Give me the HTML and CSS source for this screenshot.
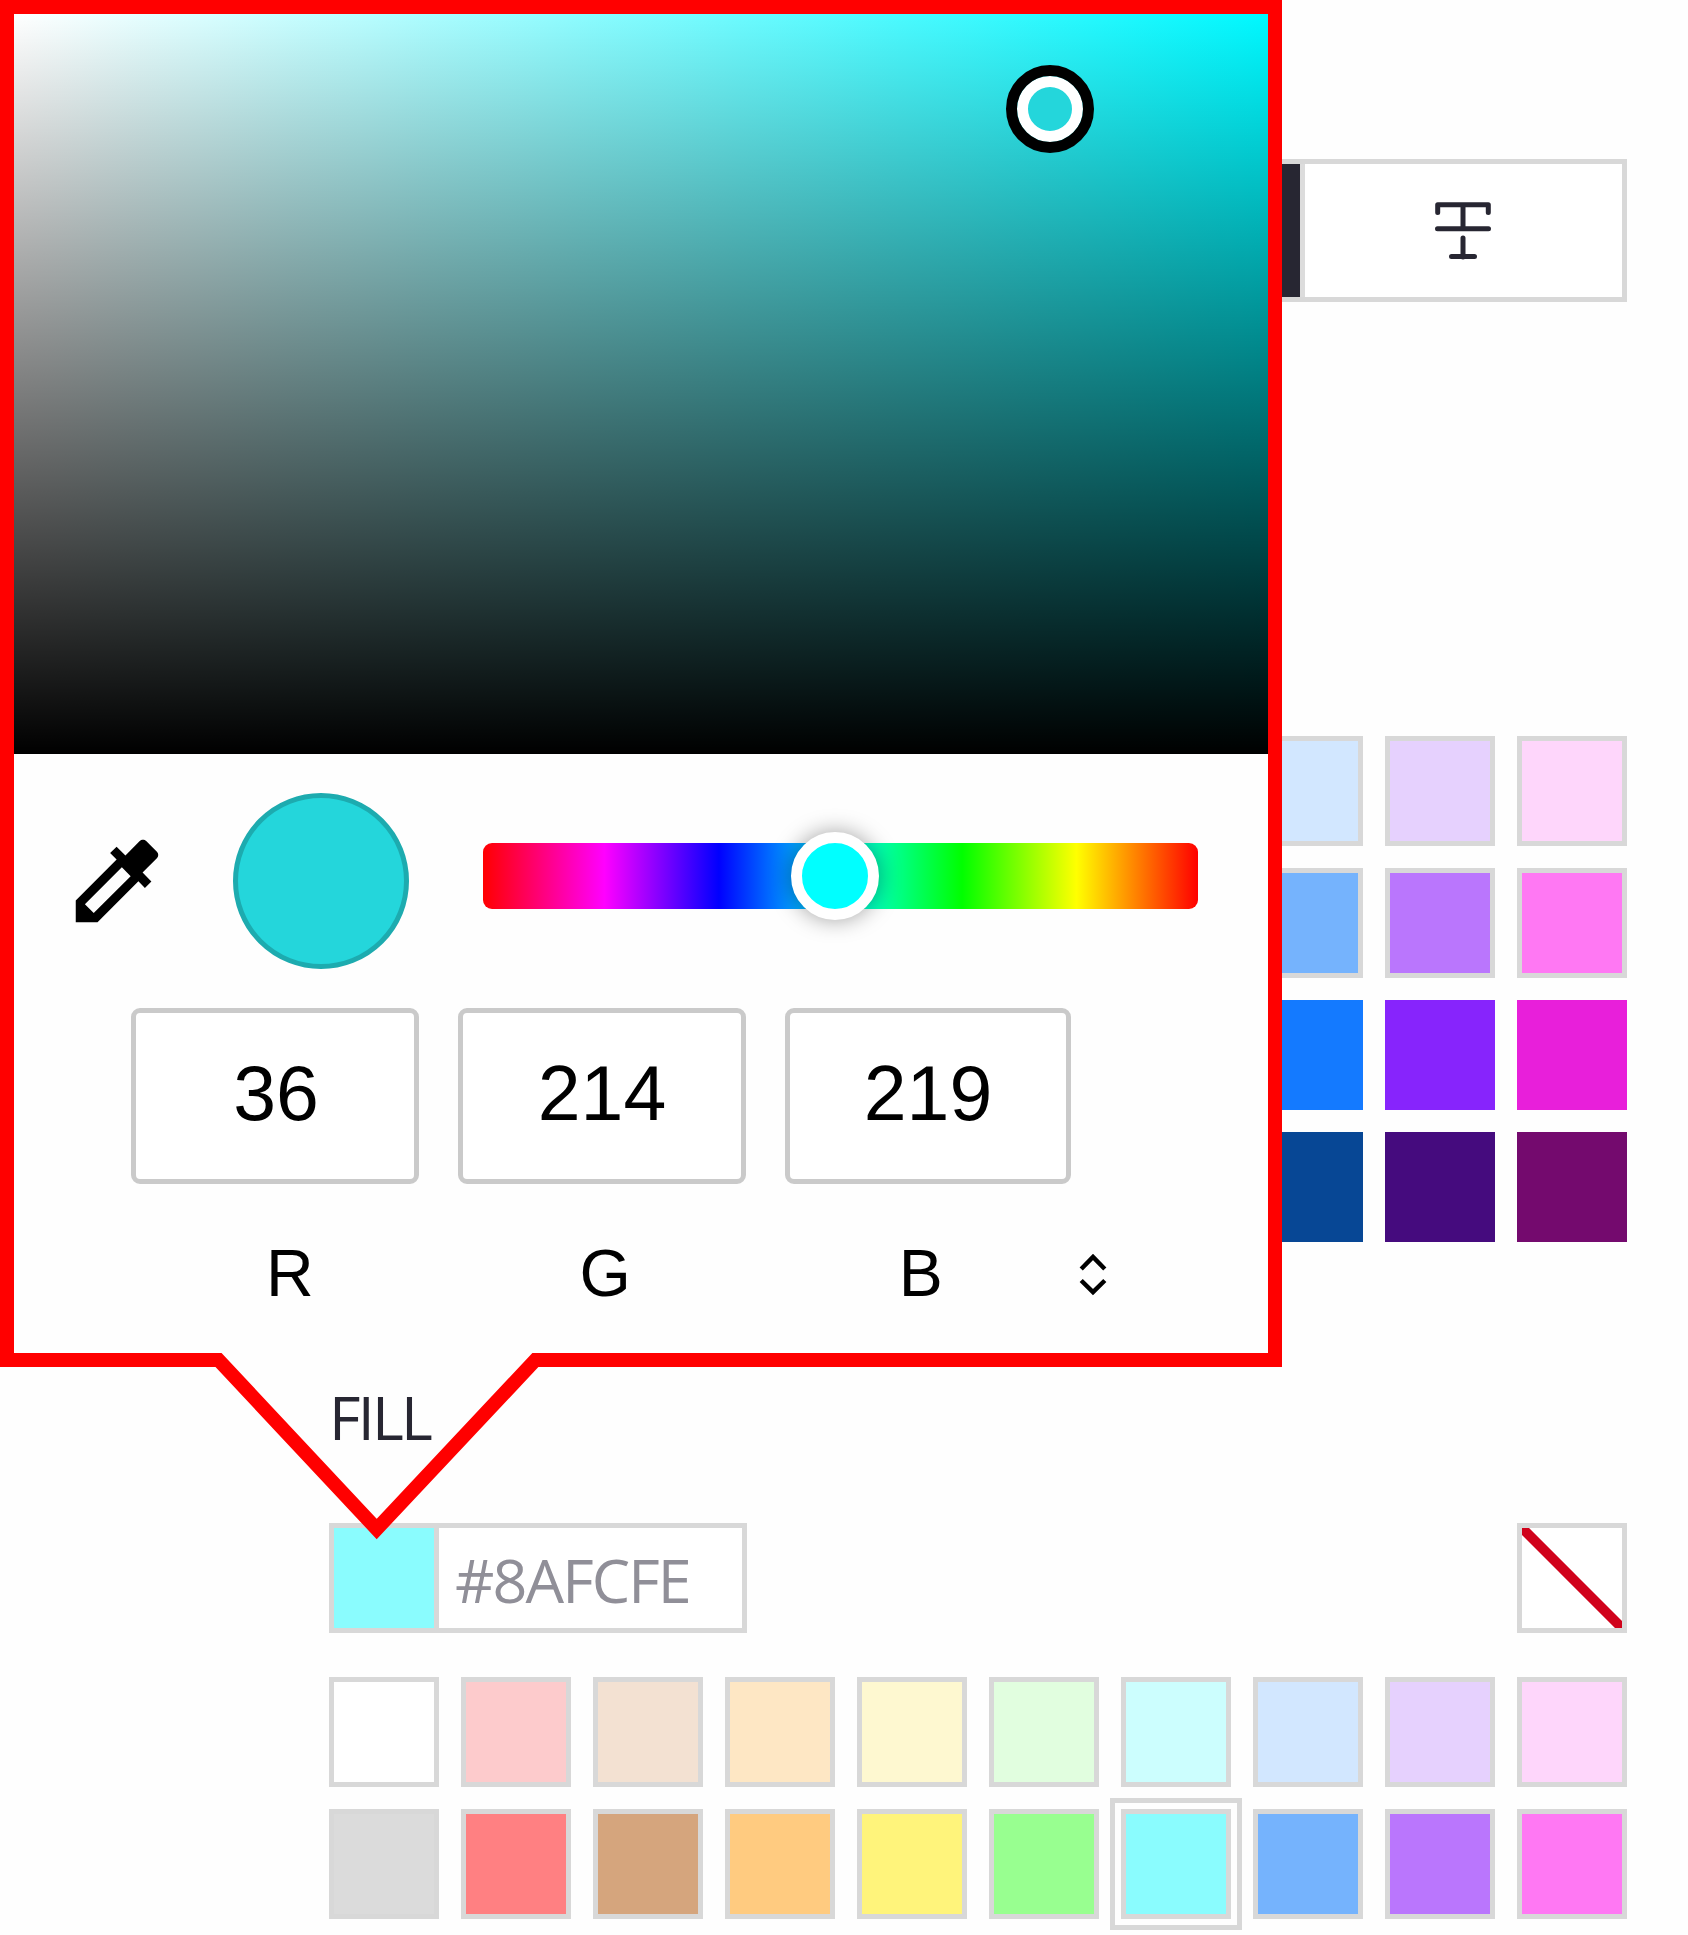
FILE: index.html
```
<!DOCTYPE html>
<html lang="en">
<head>
<meta charset="utf-8">
<title>Fill color</title>
<link rel="stylesheet" href="styles.css">
</head>
<body>
<main class="panel">
  <div class="toolbar">
    <div class="tool tool-active"></div>
    <div class="tool">
      <svg class="strike-icon" viewBox="0 0 60 60"><path d="M4.7 12.500V4.700H55.300V12.500M30 4.700V28.500M4.500 28.800H55.500M30 38V57M18.500 56.600H41.500"/></svg>
    </div>
  </div>

  <section class="palette palette-top">
    <div class="row">
      <i class="swatch c-blue1"></i><i class="swatch c-violet1"></i><i class="swatch c-pink1"></i>
    </div>
    <div class="row">
      <i class="swatch c-blue2"></i><i class="swatch c-violet2"></i><i class="swatch c-pink2"></i>
    </div>
    <div class="row">
      <i class="swatch solid c-blue3"></i><i class="swatch solid c-violet3"></i><i class="swatch solid c-pink3"></i>
    </div>
    <div class="row">
      <i class="swatch solid c-blue4"></i><i class="swatch solid c-violet4"></i><i class="swatch solid c-pink4"></i>
    </div>
  </section>

  <h2 class="fill-title">FILL</h2>

  <div class="hex-row">
    <div class="hex-field">
      <i class="hex-chip"></i>
      <span class="hex-value">#8AFCFE</span>
    </div>
    <div class="swatch no-fill">
      <svg viewBox="0 0 100 100"><path d="M3 3L97 97"/></svg>
    </div>
  </div>

  <section class="palette">
    <div class="row">
      <i class="swatch c-white"></i><i class="swatch c-red1"></i><i class="swatch c-brown1"></i><i class="swatch c-orange1"></i><i class="swatch c-yellow1"></i><i class="swatch c-green1"></i><i class="swatch c-cyan1"></i><i class="swatch c-blue1"></i><i class="swatch c-violet1"></i><i class="swatch c-pink1"></i>
    </div>
    <div class="row">
      <i class="swatch c-grey"></i><i class="swatch c-red2"></i><i class="swatch c-brown2"></i><i class="swatch c-orange2"></i><i class="swatch c-yellow2"></i><i class="swatch c-green2"></i><i class="swatch selected c-cyan2"></i><i class="swatch c-blue2"></i><i class="swatch c-violet2"></i><i class="swatch c-pink2"></i>
    </div>
  </section>
</main>

<aside class="picker">
  <div class="spectrum"><div class="spectrum-handle"></div></div>
  <div class="controls">
    <svg class="dropper" viewBox="0 0 24 24"><path d="M20.710 5.630l-2.340-2.340c-.39-.39-1.020-.39-1.410 0l-3.120 3.120-1.930-1.910-1.410 1.410 1.420 1.420L3 16.250V21h4.750l8.920-8.920 1.420 1.420 1.410-1.410-1.920-1.920 3.120-3.120c.4-.4.4-1.030.01-1.420zM6.920 19L5 17.080l8.060-8.060 1.920 1.920L6.920 19z"/></svg>
    <div class="preview"></div>
    <div class="hue"><div class="hue-handle"></div></div>
  </div>
  <div class="channels">
    <div class="channel">36</div>
    <div class="channel">214</div>
    <div class="channel channel-last">219</div>
  </div>
  <div class="labels">
    <span class="label">R</span>
    <span class="label">G</span>
    <span class="label">B</span>
    <svg class="stepper" viewBox="0 0 28 44"><path d="M2.200 17L14 5L25.800 17M2.200 28.500L14 40L25.800 28.500"/></svg>
  </div>
  <svg class="outline" viewBox="0 0 1282 1545"><path d="M7 7H1275V1360H535.400L376.700 1529L218.500 1360H7Z"/></svg>
</aside>
</body>
</html>
```
FILE: styles.css
```
* {
  box-sizing: border-box;
}

body {
  margin: 0;
  width: 1688px;
  height: 1935px;
  overflow: hidden;
  position: relative;
  background: #fefefe;
  font-family: "Liberation Sans", Arial, sans-serif;
}

svg {
  display: block;
}

/* Properties panel */
.panel {
  width: 1627px;
  padding: 159px 0 0 329px;
}

.toolbar {
  height: 143px;
  border: 5px solid #d8d8d8;
  background: #fff;
  display: flex;
  justify-content: flex-end;
}

.tool {
  width: 317px;
  display: flex;
  align-items: center;
  justify-content: center;
}

.tool-active {
  background: #272632;
  width: 322px;
  border-right: 5px solid #dcdcdc;
}

.strike-icon {
  width: 60px;
  height: 60px;
  margin: 0 2px 2px 0;
}

.strike-icon path {
  fill: none;
  stroke: #272632;
  stroke-width: 5;
  stroke-linecap: round;
  stroke-linejoin: round;
}

.palette {
  display: flex;
  flex-direction: column;
  gap: 22px;
}

.palette-top {
  margin-top: 434px;
}

.row {
  display: flex;
  justify-content: flex-end;
  gap: 22px;
}

.swatch {
  display: block;
  width: 110px;
  height: 110px;
  border: 5px solid #d8d8d8;
}

.solid {
  border: 0;
}

.selected {
  outline: 5px solid #d8d8d8;
  outline-offset: 6px;
}

.c-white { background: #fff; }
.c-red1 { background: #fdcbcc; }
.c-brown1 { background: #f3e1d2; }
.c-orange1 { background: #fee7c4; }
.c-yellow1 { background: #fef8d0; }
.c-green1 { background: #e1fedf; }
.c-cyan1 { background: #ccfefe; }
.c-blue1 { background: #d2e7ff; }
.c-violet1 { background: #e6d1fe; }
.c-pink1 { background: #fed6fb; }
.c-grey { background: #dbdbdb; }
.c-red2 { background: #ff8082; }
.c-brown2 { background: #d5a57d; }
.c-orange2 { background: #ffcb80; }
.c-yellow2 { background: #fff47b; }
.c-green2 { background: #98ff90; }
.c-cyan2 { background: #8afcfe; }
.c-blue2 { background: #75b3fd; }
.c-violet2 { background: #ba76fd; }
.c-pink2 { background: #ff78f3; }
.c-blue3 { background: #147aff; }
.c-violet3 { background: #8724fc; }
.c-pink3 { background: #e81fda; }
.c-blue4 { background: #074795; }
.c-violet4 { background: #450b7e; }
.c-pink4 { background: #740a6e; }

.fill-title {
  margin: 132px 0 0;
  height: 87px;
  font: 400 61px/86px "Open Sans", "Noto Sans", sans-serif;
  letter-spacing: -2.800px;
  color: #272632;
}

.hex-row {
  margin: 62px 0 44px;
  display: flex;
  justify-content: space-between;
}

.hex-field {
  width: 418px;
  height: 110px;
  border: 5px solid #d8d8d8;
  background: #fff;
  display: flex;
}

.hex-chip {
  width: 105px;
  background: #8afcfe;
  border-right: 5px solid #d8d8d8;
}

.hex-value {
  padding-left: 16px;
  font: 400 61px/103px "Open Sans", "Noto Sans", sans-serif;
  letter-spacing: -1.900px;
  color: #908f98;
}

.no-fill {
  background: #fff;
}

.no-fill path {
  stroke: #d0021b;
  stroke-width: 10;
  stroke-linecap: round;
}

/* Color picker callout, floating over the panel */
.picker {
  position: absolute;
  left: 0;
  top: 0;
  width: 1282px;
  height: 1367px;
  padding: 14px;
  background: #fefefe;
  color: #000;
}

.spectrum {
  position: relative;
  height: 740px;
  background: linear-gradient(to top, #000, transparent), linear-gradient(to right, #fff, #00f8ff);
}

.spectrum-handle {
  position: absolute;
  left: 991.500px;
  top: 50.500px;
  width: 88px;
  height: 88px;
  border-radius: 50%;
  border: 11px solid #000;
  background: #24d6db;
  box-shadow: inset 0 0 0 11px #fff;
}

.controls {
  height: 254px;
  padding-left: 48px;
  display: flex;
  align-items: flex-start;
}

.dropper {
  width: 110px;
  height: 110px;
  margin-top: 71.500px;
}

.preview {
  width: 176px;
  height: 176px;
  margin: 39px 0 0 60.500px;
  border-radius: 50%;
  border: 5px solid #1dabaf;
  background: #24d6db;
}

.hue {
  position: relative;
  width: 715px;
  height: 66px;
  margin: 89px 0 0 74px;
  border-radius: 9px;
  background: linear-gradient(to right, #f00, #f0f 17%, #00f 33%, #0ff 50%, #0f0 67%, #ff0 83%, #f00);
}

.hue-handle {
  position: absolute;
  left: 308px;
  top: -11px;
  width: 88px;
  height: 88px;
  border-radius: 50%;
  border: 11px solid #fff;
  background: #0ff;
  box-shadow: 0 0 22px rgba(0, 0, 0, .37);
}

.channels {
  display: flex;
  gap: 39px;
  padding-left: 117px;
}

.channel {
  width: 288px;
  height: 176px;
  border: 5px solid #cacaca;
  border-radius: 9px;
  background: #fff;
  font-size: 77px;
  line-height: 161px;
  text-align: center;
}

.channel:first-child {
  padding-left: 2px;
}

.channel-last {
  width: 286px;
}

.labels {
  display: flex;
  align-items: center;
  height: 88px;
  margin-top: 45px;
  padding-left: 118px;
}

.label {
  width: 315.500px;
  text-align: center;
  font-size: 66px;
  line-height: 88px;
}

.stepper {
  width: 28px;
  height: 44px;
  margin-top: 1px;
}

.stepper path {
  fill: none;
  stroke: #000;
  stroke-width: 4.500;
}

.outline {
  position: absolute;
  left: 0;
  top: 0;
  width: 1282px;
  height: 1545px;
}

.outline path {
  fill: none;
  stroke: #f00;
  stroke-width: 14;
  stroke-miterlimit: 10;
}
```
